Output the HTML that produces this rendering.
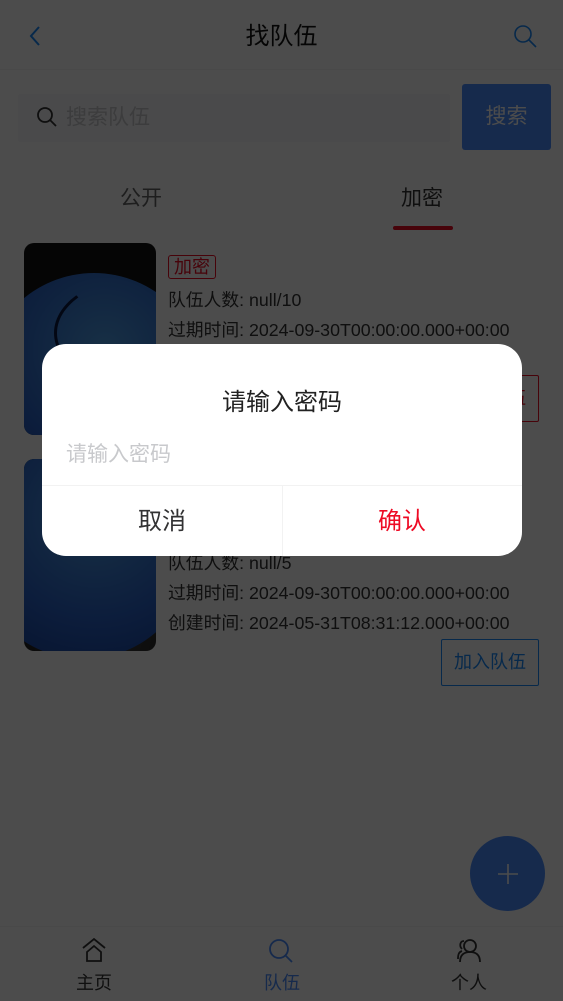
<!DOCTYPE html>
<html><head><meta charset="utf-8"><style>
*{margin:0;padding:0;box-sizing:border-box}
body{width:563px;height:1001px;position:relative;overflow:hidden;background:#fff;font-family:"Liberation Sans","Noto Sans CJK SC",sans-serif;color:#323233}
.a{position:absolute;line-height:1.2}
.img{position:absolute;left:24px;width:132px;height:192px;border-radius:10px;overflow:hidden;background:radial-gradient(circle at 60% 90%,#444 0,#111 60%)}
.ball{position:absolute;left:-40px;top:30px;width:220px;height:220px;border-radius:50%;background:radial-gradient(circle at 55% 35%,#4fa0e8,#2a62c8 55%,#123a90);}
.seam{position:absolute;border:3px solid #0a1a40;border-radius:50%}
.ln{position:absolute;font-size:17.8px;line-height:20px;color:#323233;left:168px;white-space:nowrap}
.btn{position:absolute;left:441px;width:98px;height:47px;border:1px solid #1989fa;color:#1989fa;font-size:18px;text-align:center;line-height:45px;border-radius:2px}
.ov{position:absolute;left:0;top:0;width:563px;height:1001px;background:rgba(0,0,0,.7)}
</style></head><body>
<svg class="a" style="left:26px;top:24px" width="20" height="24" viewBox="0 0 20 24"><path d="M13 3 L5 12 L13 21" fill="none" stroke="#1989fa" stroke-width="2"/></svg>
<div class="a" style="left:0;width:563px;top:23px;text-align:center;font-size:24px;color:#111">找队伍</div>
<svg class="a" style="left:513px;top:24px" width="26" height="26" viewBox="0 0 26 26"><circle cx="10" cy="10" r="8" fill="none" stroke="#1989fa" stroke-width="1.6"/><path d="M16 16 L23 23" stroke="#1989fa" stroke-width="1.6"/></svg>
<div class="a" style="left:0;top:69px;width:563px;height:1px;background:#f3f3f3"></div>
<div class="a" style="left:18px;top:94px;width:432px;height:48px;background:#f7f8fa;border-radius:2px"></div>
<svg class="a" style="left:36px;top:106px" width="22" height="22" viewBox="0 0 22 22"><circle cx="9" cy="9" r="7" fill="none" stroke="#333" stroke-width="1.8"/><path d="M14 14 L20 20" stroke="#333" stroke-width="1.8"/></svg>
<div class="a" style="left:66px;top:105px;font-size:21px;color:#c8c9cc">搜索队伍</div>
<div class="a" style="left:462px;top:84px;width:89px;height:66px;background:#4a8cff;border-radius:3px;color:#fff;font-size:21px;text-align:center;line-height:66px">搜索</div>
<div class="a" style="left:120px;top:186px;font-size:21px;color:#646566">公开</div>
<div class="a" style="left:401px;top:186px;font-size:21px;color:#323233">加密</div>
<div class="a" style="left:393px;top:226px;width:60px;height:4px;border-radius:2px;background:#ee0a24"></div>

<div class="img" style="top:243px"><div class="ball"></div><div class="seam" style="left:30px;top:30px;width:200px;height:120px;border-color:transparent transparent transparent #0a1a40"></div></div>
<div class="a" style="left:168px;top:255px;width:48px;height:24px;border:1px solid #ee0a24;color:#ee0a24;font-size:18px;line-height:22px;text-align:center;border-radius:3px">加密</div>
<div class="ln" style="top:290px">队伍人数: null/10</div>
<div class="ln" style="top:320px">过期时间: 2024-09-30T00:00:00.000+00:00</div>
<div class="ln" style="top:350px">创建时间: 2024-05-31T08:31:12.000+00:00</div>
<div class="btn" style="top:375px;border-color:#ee0a24;color:#ee0a24">加入队伍</div>

<div class="img" style="top:459px"><div class="ball" style="top:-20px;left:-50px"></div></div>
<div class="ln" style="top:553px">队伍人数: null/5</div>
<div class="ln" style="top:583px">过期时间: 2024-09-30T00:00:00.000+00:00</div>
<div class="ln" style="top:613px">创建时间: 2024-05-31T08:31:12.000+00:00</div>
<div class="btn" style="top:639px">加入队伍</div>

<div class="a" style="left:470px;top:836px;width:75px;height:75px;border-radius:50%;background:#4a8cff"></div>
<svg class="a" style="left:496px;top:862px" width="24" height="24" viewBox="0 0 24 24"><path d="M12 2 V22 M2 12 H22" stroke="#fff" stroke-width="1.6"/></svg>

<div class="a" style="left:0;top:926px;width:563px;height:1px;background:#f3f3f3"></div>
<svg class="a" style="left:80px;top:936px" width="28" height="28" viewBox="0 0 28 28"><path d="M3 12 L14 3 L25 12 M7 16 L14 10 L21 16 V25 H7 Z" fill="none" stroke="#333" stroke-width="1.8"/></svg>
<div class="a" style="left:76px;top:973px;font-size:18px;color:#333">主页</div>
<svg class="a" style="left:267px;top:937px" width="28" height="28" viewBox="0 0 28 28"><circle cx="12" cy="12" r="9" fill="none" stroke="#4a8cff" stroke-width="1.8"/><path d="M18.5 18.5 L25 25" stroke="#4a8cff" stroke-width="1.8"/></svg>
<div class="a" style="left:264px;top:973px;font-size:18px;color:#4a8cff">队伍</div>
<svg class="a" style="left:454px;top:937px" width="30" height="28" viewBox="0 0 30 28"><circle cx="16" cy="9" r="6" fill="none" stroke="#333" stroke-width="1.8"/><path d="M6 25 C6 17 11 15 16 15 C21 15 26 17 26 25" fill="none" stroke="#333" stroke-width="1.8"/><path d="M10 4 C6 4 5 9 8 12 M4 22 C4 17 5 15 8 14" fill="none" stroke="#333" stroke-width="1.8"/></svg>
<div class="a" style="left:451px;top:973px;font-size:18px;color:#333">个人</div>

<div class="ov"></div>

<div class="a" style="left:42px;top:344px;width:480px;height:212px;background:#fff;border-radius:24px;overflow:hidden">
 <div class="a" style="left:0;top:45px;width:480px;text-align:center;font-size:24px;color:#222">请输入密码</div>
 <div class="a" style="left:24px;top:98px;font-size:21px;color:#c8c9cc">请输入密码</div>
 <div class="a" style="left:0;top:141px;width:480px;height:1px;background:#f2f2f2"></div>
 <div class="a" style="left:240px;top:141px;width:1px;height:71px;background:#f2f2f2"></div>
 <div class="a" style="left:0;top:164px;width:240px;text-align:center;font-size:24px;color:#323233">取消</div>
 <div class="a" style="left:240px;top:164px;width:240px;text-align:center;font-size:24px;color:#ee0a24">确认</div>
</div>
</body></html>
